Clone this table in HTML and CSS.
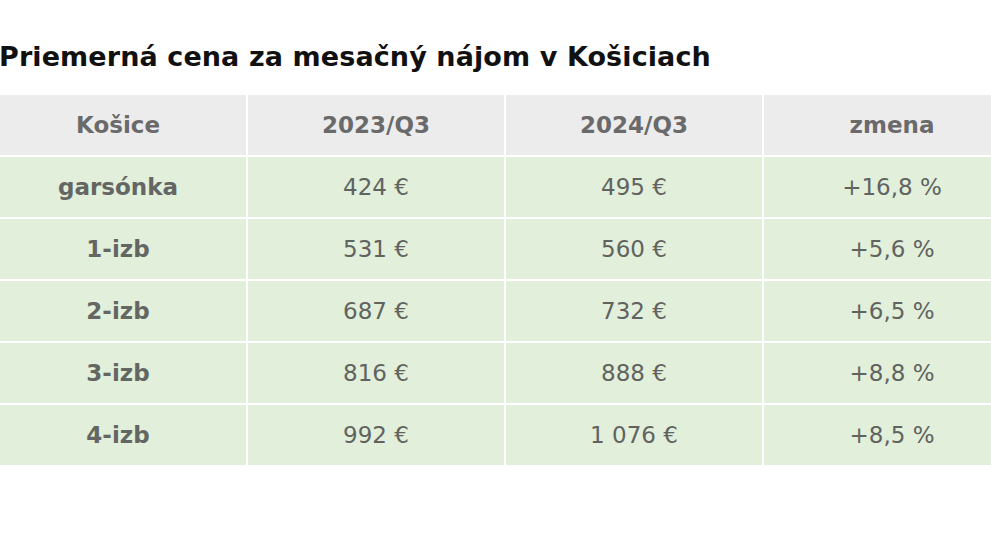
FILE: index.html
```html
<!DOCTYPE html>
<html lang="sk">
<head>
<meta charset="utf-8">
<link rel="stylesheet" href="styles.css">
</head>
<body>
<div class="wrap">
  <h2 class="title">Priemerná cena za mesačný nájom v Košiciach</h2>
  <table class="tbl">
    <thead>
      <tr><th>Košice</th><th>2023/Q3</th><th>2024/Q3</th><th>zmena</th></tr>
    </thead>
    <tbody>
      <tr><th>garsónka</th><td>424 €</td><td>495 €</td><td>+16,8 %</td></tr>
      <tr><th>1-izb</th><td>531 €</td><td>560 €</td><td>+5,6 %</td></tr>
      <tr><th>2-izb</th><td>687 €</td><td>732 €</td><td>+6,5 %</td></tr>
      <tr><th>3-izb</th><td>816 €</td><td>888 €</td><td>+8,8 %</td></tr>
      <tr><th>4-izb</th><td>992 €</td><td>1 076 €</td><td>+8,5 %</td></tr>
    </tbody>
  </table>
</div>
</body>
</html>
```
FILE: styles.css
```css
html, body { margin: 0; padding: 0; background: #fff; overflow: hidden; }
body { font-family: "DejaVu Sans", "Noto Sans", sans-serif; }
.wrap { margin-left: -12px; width: 1034px; padding-top: 39px; }
.title { margin: 0 0 0 11px; font-size: 27px; font-weight: 700; color: #111; line-height: 36px; height: 54px; letter-spacing: 0.1px; white-space: nowrap; }
.tbl { width: 1034px; border-collapse: collapse; table-layout: fixed; }
.tbl th, .tbl td { height: 60px; padding: 0; text-align: center; font-size: 23px; color: #606360; border: 2px solid #fff; }
.tbl thead th { background: #ececec; font-weight: 700; color: #6a6a6a; }
.tbl tbody th { background: #e2efda; font-weight: 700; color: #636663; }
.tbl tbody td { background: #e2efda; font-weight: 400; }
```
